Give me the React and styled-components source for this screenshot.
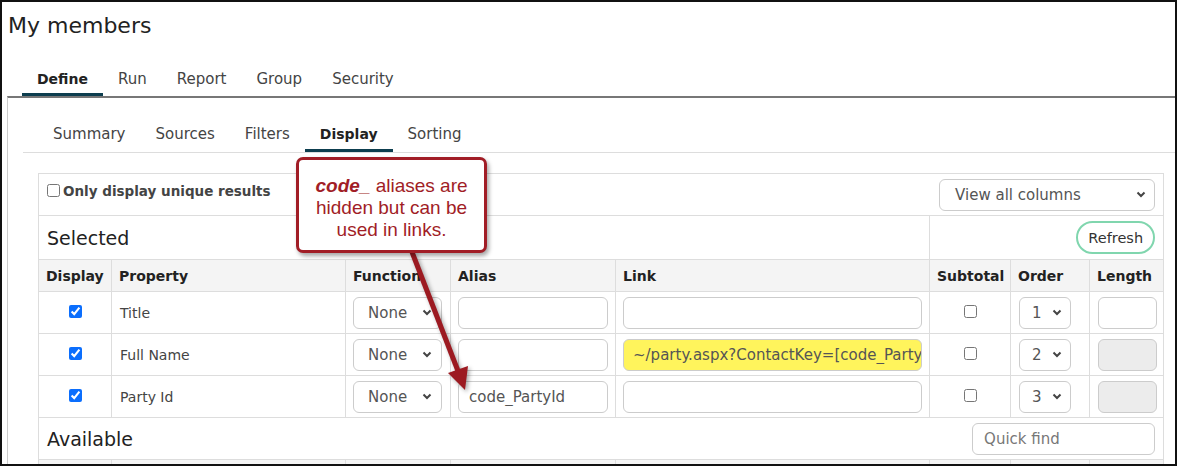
import React from "react";
import styled, { createGlobalStyle } from "styled-components";

const GlobalStyle = createGlobalStyle`
  body {
    margin: 0;
    background: #fff;
    font-family: "DejaVu Sans", "Open Sans", sans-serif;
    color: #333;
  }
`;

const Frame = styled.div`
  position: relative;
  box-sizing: border-box;
  width: 1177px;
  height: 466px;
  border: 2px solid #111;
  overflow: hidden;
`;

const PageTitle = styled.h1`
  margin: 0;
  padding: 11px 6px 0;
  font-size: 22px;
  line-height: 26px;
  font-weight: 400;
  color: #222;
`;

const TabBar = styled.div`
  display: flex;
  margin-top: 20px;
  padding-left: 20px;
`;

const Tab = styled.div`
  padding: ${(p) => p.$top}px 15px ${(p) => p.$bottom}px;
  font-size: ${(p) => (p.$active ? 14 : 15)}px;
  line-height: 20px;
  font-weight: ${(p) => (p.$active ? 700 : 400)};
  color: ${(p) => (p.$active ? "#222" : "#444")};
  border-bottom: 3px solid ${(p) => (p.$active ? "#0d3e4f" : "transparent")};
`;

const Panel = styled.div`
  margin-left: 5px;
  border-top: 2px solid #777;
  border-left: 1px solid #ccc;
  padding-left: 15px;
  height: 400px;
`;

const SubTabBar = styled.div`
  display: flex;
  padding: 15px 0 0 15px;
  border-bottom: 1px solid #ddd;
`;

const Grid = styled.table`
  margin: 20px 12px 0 15px;
  width: 1125px;
  border-collapse: collapse;
  table-layout: fixed;
  border: 1px solid #ddd;
  font-size: 14px;
`;

const Row = styled.tr`
  height: ${(p) => p.$h}px;
  background: ${(p) => (p.$head ? "#f4f4f4" : "#fff")};
`;

const Cell = styled.td`
  box-sizing: border-box;
  border: 1px solid #ddd;
  padding: 0 ${(p) => p.$pr ?? 7}px 0 ${(p) => p.$pl ?? 7}px;
  vertical-align: middle;
  text-align: ${(p) => p.$align || "left"};
  color: #444;
`;

const HeadCell = styled.th`
  border: 1px solid #ddd;
  padding: 0 7px;
  text-align: left;
  font-size: 14px;
  font-weight: 700;
  color: #222;
  white-space: nowrap;
  overflow: hidden;
`;

const Split = styled.div`
  display: flex;
  align-items: center;
  justify-content: space-between;
`;

const CheckLabel = styled.label`
  display: flex;
  align-items: center;
  gap: 3px;
  font-size: 13.5px;
  font-weight: 700;
  color: #444;
  margin-top: -8px;
`;

const Check = styled.input.attrs({ type: "checkbox" })`
  margin: 0;
  width: 13px;
  height: 13px;
  accent-color: #0b6efd;
`;

const SectionTitle = styled.div`
  font-size: 19px;
  color: #222;
`;

const SelectBox = styled.div`
  display: flex;
  align-items: center;
  justify-content: space-between;
  box-sizing: border-box;
  width: ${(p) => p.$w}px;
  height: 32px;
  padding: 0 ${(p) => p.$pr ?? 9}px 0 ${(p) => p.$pl ?? 14}px;
  border: 1px solid #ccc;
  border-radius: 6px;
  background: #fff;
  font-size: 15px;
  color: #555;
`;

const Field = styled.input`
  box-sizing: border-box;
  display: block;
  width: ${(p) => p.$w}px;
  height: 32px;
  padding: 0 0 0 ${(p) => p.$pl ?? 9}px;
  border: 1px solid #ccc;
  border-radius: 6px;
  background: ${(p) => p.$bg || "#fff"};
  font-family: inherit;
  font-size: 15px;
  color: #555;
  &::placeholder {
    color: #777;
  }
`;

const PillButton = styled.button`
  box-sizing: border-box;
  height: 33px;
  padding: 0 10px;
  border: 2px solid #80d6ae;
  border-radius: 17px;
  background: #fff;
  font-family: inherit;
  font-size: 14.5px;
  color: #333;
`;

const Callout = styled.div`
  position: absolute;
  left: 294px;
  top: 155px;
  box-sizing: border-box;
  width: 191px;
  height: 96px;
  padding-top: 15px;
  border: 3px solid #a11d26;
  border-radius: 7px;
  background: #fff;
  box-shadow: 2px 3px 4px rgba(0, 0, 0, 0.35);
  font-family: "Liberation Sans", Arial, sans-serif;
  font-size: 19px;
  line-height: 22px;
  text-align: center;
  color: #a11d26;
`;

const Arrow = styled.svg`
  position: absolute;
  left: 0;
  top: 0;
  filter: drop-shadow(2px 2px 2px rgba(0, 0, 0, 0.35));
  pointer-events: none;
`;

const Chevron = () => (
  <svg width="10" height="7" viewBox="0 0 10 7">
    <path d="M1.5 1.5l3.5 3.5 3.5-3.5" fill="none" stroke="#444" strokeWidth="2" />
  </svg>
);

const Select = ({ value, w, pl, pr }) => (
  <SelectBox $w={w} $pl={pl} $pr={pr}>
    <span>{value}</span>
    <Chevron />
  </SelectBox>
);

const columns = [
  ["Display", 73],
  ["Property", 234],
  ["Function", 105],
  ["Alias", 165],
  ["Link", 314],
  ["Subtotal", 81],
  ["Order", 79],
  ["Length", 74],
];

const selected = [
  { name: "Title", alias: "", link: "", order: 1, fixed: false },
  {
    name: "Full Name",
    alias: "",
    link: "~/party.aspx?ContactKey=[code_PartyId]",
    order: 2,
    fixed: true,
  },
  { name: "Party Id", alias: "code_PartyId", link: "", order: 3, fixed: true },
];

// the available-columns list starts right at the bottom edge, only its header band shows
const HeaderRow = ({ blank }) => (
  <Row $h={32} $head>
    {columns.map(([label]) => (
      <HeadCell key={label}>{blank ? "" : label}</HeadCell>
    ))}
  </Row>
);

export default function App() {
  return (
    <>
      <GlobalStyle />
      <Frame>
        <PageTitle>My members</PageTitle>
        <TabBar>
          <Tab $active $top={10} $bottom={4}>Define</Tab>
          <Tab $top={10} $bottom={4}>Run</Tab>
          <Tab $top={10} $bottom={4}>Report</Tab>
          <Tab $top={10} $bottom={4}>Group</Tab>
          <Tab $top={10} $bottom={4}>Security</Tab>
        </TabBar>
        <Panel>
          <SubTabBar>
            <Tab $top={11} $bottom={5}>Summary</Tab>
            <Tab $top={11} $bottom={5}>Sources</Tab>
            <Tab $top={11} $bottom={5}>Filters</Tab>
            <Tab $active $top={11} $bottom={5}>Display</Tab>
            <Tab $top={11} $bottom={5}>Sorting</Tab>
          </SubTabBar>
          <Grid>
            <colgroup>
              {columns.map(([label, width]) => (
                <col key={label} style={{ width }} />
              ))}
            </colgroup>
            <tbody>
              <Row $h={42}>
                <Cell colSpan={8} $pl={8} $pr={8}>
                  <Split>
                    <CheckLabel>
                      <Check />
                      Only display unique results
                    </CheckLabel>
                    <Select value="View all columns" w={216} pl={15} pr={8} />
                  </Split>
                </Cell>
              </Row>
              <Row $h={44}>
                <Cell colSpan={5} $pl={8}>
                  <SectionTitle>Selected</SectionTitle>
                </Cell>
                <Cell colSpan={3} $align="right" $pr={8}>
                  <PillButton>Refresh</PillButton>
                </Cell>
              </Row>
              <HeaderRow />
              {selected.map((item) => (
                <Row $h={42} key={item.name}>
                  <Cell $align="center">
                    <Check defaultChecked />
                  </Cell>
                  <Cell $pl={8}>{item.name}</Cell>
                  <Cell>
                    <Select value="None" w={89} />
                  </Cell>
                  <Cell>
                    <Field $w={150} $pl={10} defaultValue={item.alias} />
                  </Cell>
                  <Cell>
                    <Field
                      $w={299}
                      $bg={item.link ? "#fff45c" : "#fff"}
                      defaultValue={item.link}
                    />
                  </Cell>
                  <Cell $align="center">
                    <Check />
                  </Cell>
                  <Cell $pl={8}>
                    <Select value={String(item.order)} w={52} pl={12} pr={8} />
                  </Cell>
                  <Cell $pl={8}>
                    <Field $w={59} $bg={item.fixed ? "#ececec" : "#fff"} disabled={item.fixed} />
                  </Cell>
                </Row>
              ))}
              <Row $h={42}>
                <Cell colSpan={8} $pl={8} $pr={8}>
                  <Split>
                    <SectionTitle>Available</SectionTitle>
                    <Field $w={183} $pl={11} placeholder="Quick find" />
                  </Split>
                </Cell>
              </Row>
              <HeaderRow blank />
            </tbody>
          </Grid>
        </Panel>

        <Arrow width="1177" height="466" viewBox="0 0 1177 466">
          <line x1="410" y1="250" x2="456" y2="369" stroke="#9c1a21" strokeWidth="5" />
          <polygon points="463,388 446,371 466,364" fill="#9c1a21" />
        </Arrow>
        <Callout>
          <b>
            <i>code_</i>
          </b>{" "}
          aliases are
          <br />
          hidden but can be
          <br />
          used in links.
        </Callout>
      </Frame>
    </>
  );
}
